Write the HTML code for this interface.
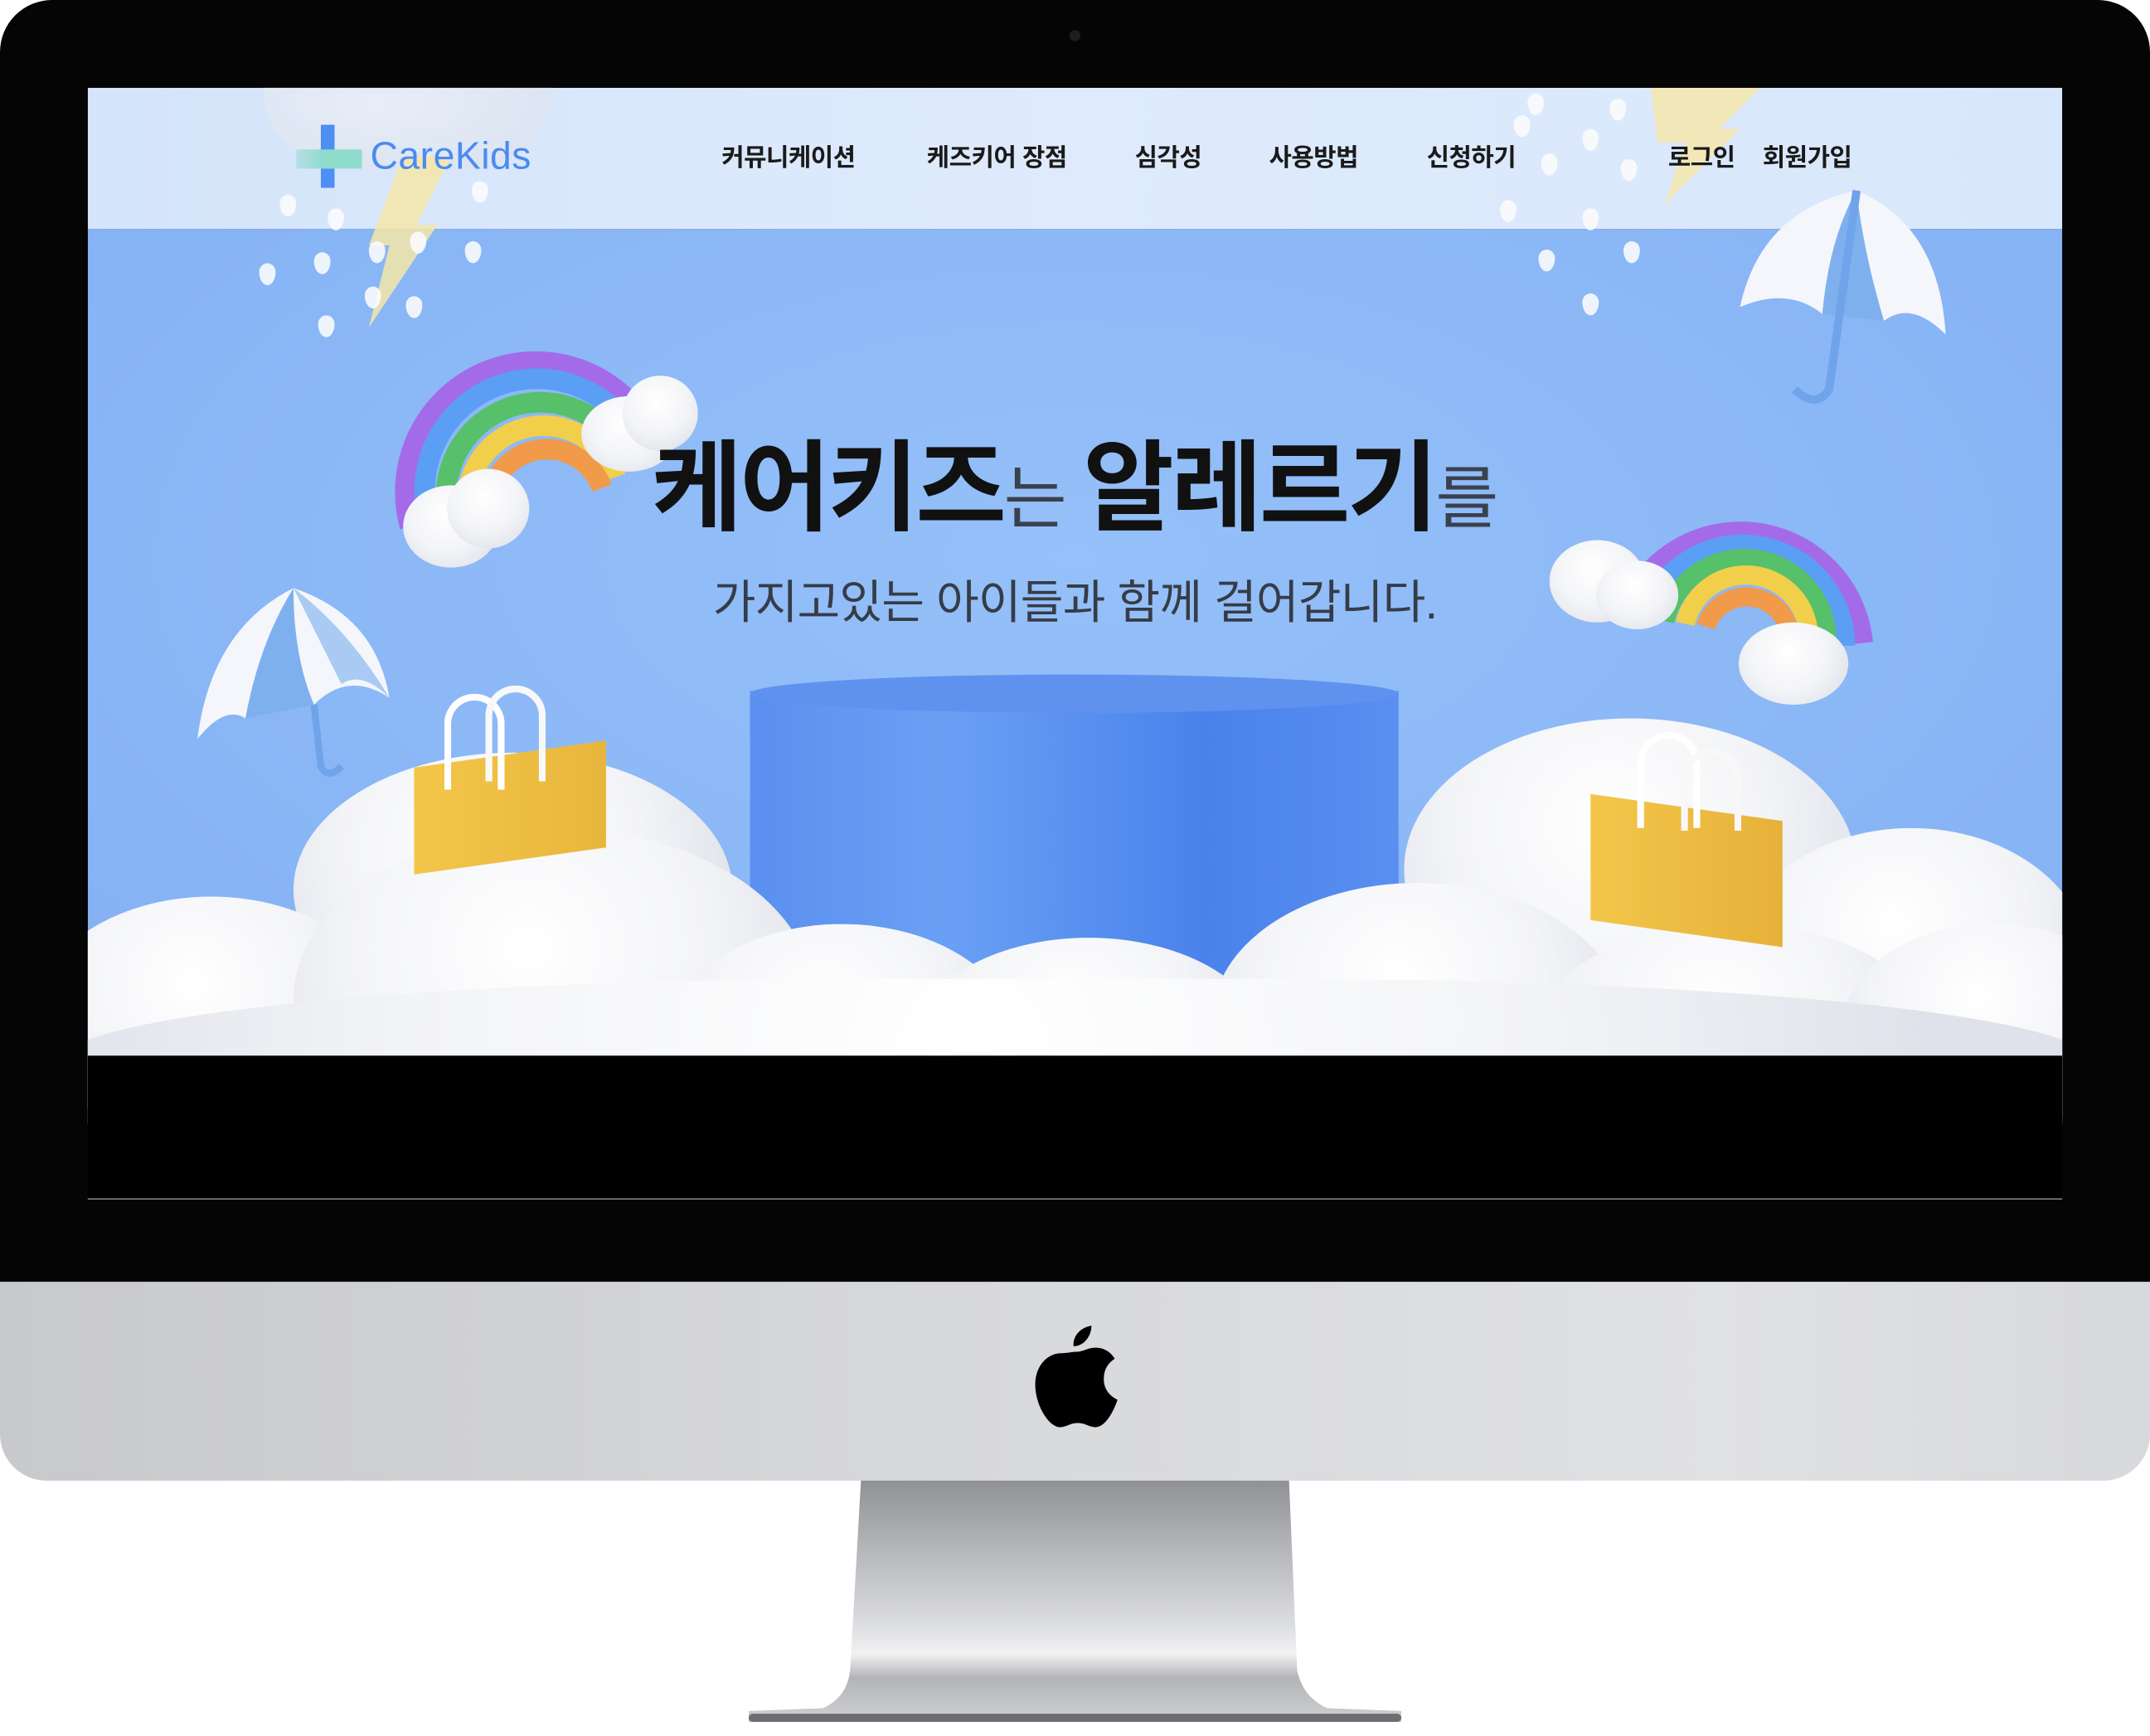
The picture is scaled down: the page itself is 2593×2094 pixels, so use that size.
<!DOCTYPE html>
<html><head><meta charset="utf-8">
<style>
*{margin:0;padding:0;box-sizing:border-box}
html,body{width:2593px;height:2093px;overflow:hidden;background:#fff}
#w{position:absolute;left:0;top:0;width:1568px;height:1266px;transform:scale(1.65370);transform-origin:0 0;font-family:"Liberation Sans","Noto Sans CJK KR",sans-serif}
.a{position:absolute}
#bezel{left:0;top:0;width:1568px;height:935px;background:#050505;border-radius:38px 38px 0 0}
#screen{left:64px;top:64px;width:1440px;height:811px;background:#000;overflow:hidden;border-bottom:1px solid #888}
#hdr{left:0;top:0;width:1440px;height:103px;background:linear-gradient(90deg,#d4e4fa,#dfebfc 50%,#d8e7fb)}
#hero{left:0;top:103px;width:1440px;height:603px;background:radial-gradient(ellipse at 50% 40%,#95c0f9,#88b5f5 70%,#84b0f2)}
.c{position:absolute;border-radius:50%;background:radial-gradient(circle at 45% 35%,#ffffff,#f3f4f7 50%,#dfe2ea 85%)}
.nav{position:absolute;top:103px;font-size:18px;font-weight:bold;color:#1a1a1a;transform:translate(-50%,-50%);white-space:nowrap;letter-spacing:-.3px}
.drop{position:absolute;width:12px;height:16px;background:#fafbfd;border-radius:50% 50% 50% 50%/40% 40% 60% 60%;opacity:.9}
#chin{left:0;top:935px;width:1568px;height:145px;background:linear-gradient(90deg,#c8c9cc,#d6d7da 40%,#e0e1e3 80%,#d8d9dc);border-radius:0 0 34px 34px}
</style></head><body><div id="w">
<svg class="a" style="left:0;top:1078px" width="1568" height="188">
<defs><linearGradient id="st" x1="0" y1="0" x2="0" y2="1"><stop offset="0" stop-color="#8f9094"/><stop offset=".3" stop-color="#b6b7bb"/><stop offset=".6" stop-color="#dcdde0"/><stop offset=".72" stop-color="#f2f2f3"/><stop offset=".82" stop-color="#b3b4b7"/><stop offset="1" stop-color="#cfd0d2"/></linearGradient></defs>
<path d="M628 0 L940 0 L946 140 Q950 160 968 168 L1022 170 L1022 178 L546 178 L546 170 L600 168 Q618 160 620 140 Z" fill="url(#st)"/>
<rect x="546" y="172" width="476" height="6" rx="3" fill="#6d6e71"/>
</svg>
<div id="bezel" class="a"></div>
<div class="a" style="left:780px;top:22px;width:8px;height:8px;border-radius:50%;background:#1e1e22"></div>
<div id="chin" class="a"></div>
<svg class="a" style="left:752px;top:965px" width="66" height="78" viewBox="0 0 66 78"><path d="M44 2 C44 10 38 17 31 17 C30 10 36 3 44 2 Z M33 21 C38 21 41 18 47 18 C53 18 58 21 61 26 C55 30 53 35 53 41 C53 48 57 53 63 56 C60 65 54 76 47 76 C42 76 40 73 34 73 C28 73 26 76 21 76 C13 76 3 60 3 45 C3 31 12 22 22 22 C27 22 30 21 33 21 Z" fill="#000"/></svg>
<div id="screen" class="a">
 <div id="hero" class="a"></div>
 <div id="hdr" class="a"></div>
 <div class="a" style="left:128px;top:-20px;width:210px;height:80px;border-radius:0 0 60px 60px;background:radial-gradient(ellipse at 40% 40%,#eef1f8,#d9dfeb);opacity:.7"></div>
 <svg class="a" style="left:190px;top:50px" width="80" height="130"><path d="M40 0 L75 0 L50 50 L65 50 L15 125 L30 65 L15 65 Z" fill="#f6e6a8" opacity=".85"/></svg>
 <svg class="a" style="left:1130px;top:0" width="90" height="90"><path d="M10 0 L90 0 L60 30 L75 30 L20 85 L35 40 L15 40 Z" fill="#f6e6a8" opacity=".8"/></svg>
 <div class="drop" style="left:140px;top:78px"></div><div class="drop" style="left:175px;top:88px"></div><div class="drop" style="left:125px;top:128px"></div><div class="drop" style="left:165px;top:120px"></div><div class="drop" style="left:205px;top:112px"></div><div class="drop" style="left:235px;top:105px"></div><div class="drop" style="left:275px;top:112px"></div><div class="drop" style="left:202px;top:145px"></div><div class="drop" style="left:232px;top:152px"></div><div class="drop" style="left:168px;top:166px"></div><div class="drop" style="left:280px;top:68px"></div>
 <div class="drop" style="left:1040px;top:20px"></div><div class="drop" style="left:1060px;top:48px"></div><div class="drop" style="left:1090px;top:30px"></div><div class="drop" style="left:1110px;top:8px"></div><div class="drop" style="left:1058px;top:118px"></div><div class="drop" style="left:1090px;top:88px"></div><div class="drop" style="left:1118px;top:52px"></div><div class="drop" style="left:1090px;top:150px"></div><div class="drop" style="left:1030px;top:82px"></div><div class="drop" style="left:1120px;top:112px"></div><div class="drop" style="left:1050px;top:4px"></div>
 <div class="a" style="left:170px;top:27px;width:10px;height:46px;background:#4f8ef2"></div>
 <div class="a" style="left:152px;top:45px;width:48px;height:14px;background:linear-gradient(90deg,rgba(131,213,199,.4),#8fdccd 40%)"></div>
 <div class="a" style="left:206px;top:34px;font-size:28px;color:#4a8bf0;letter-spacing:.3px">CareKids</div>
 <div class="nav" style="left:511px;top:50px">커뮤니케이션</div>
 <div class="nav" style="left:663px;top:50px">케즈키어 장점</div>
 <div class="nav" style="left:788px;top:50px">심각성</div>
 <div class="nav" style="left:894px;top:50px">사용방법</div>
 <div class="nav" style="left:1009px;top:50px">신청하기</div>
 <div class="nav" style="left:1177px;top:50px">로그인</div>
 <div class="nav" style="left:1254px;top:50px">회원가입</div>
 <svg class="a" style="left:215px;top:170px" width="230" height="200"><g fill="none" stroke-width="15"><path d="M20 150 A95 95 0 0 1 200 90" stroke="#a46be8"/><path d="M35 150 A80 80 0 0 1 190 98" stroke="#5b9ef5"/><path d="M50 150 A65 65 0 0 1 180 106" stroke="#56c06a"/><path d="M65 150 A50 50 0 0 1 170 114" stroke="#f2cf4a"/><path d="M80 150 A35 35 0 0 1 160 122" stroke="#f09a4a"/></g></svg>
 <div class="c" style="left:230px;top:290px;width:70px;height:60px"></div><div class="c" style="left:262px;top:278px;width:60px;height:58px"></div>
 <div class="c" style="left:360px;top:225px;width:70px;height:55px"></div><div class="c" style="left:390px;top:210px;width:55px;height:55px"></div>
 <svg class="a" style="left:1090px;top:275px" width="220" height="160"><g fill="none" stroke-width="14"><path d="M30 110 A90 90 0 0 1 205 130" stroke="#a46be8"/><path d="M45 112 A75 75 0 0 1 192 132" stroke="#5b9ef5"/><path d="M60 114 A60 60 0 0 1 178 134" stroke="#56c06a"/><path d="M75 116 A45 45 0 0 1 164 136" stroke="#f2cf4a"/><path d="M90 118 A30 30 0 0 1 150 138" stroke="#f09a4a"/></g></svg>
 <div class="c" style="left:1066px;top:330px;width:70px;height:60px"></div><div class="c" style="left:1100px;top:345px;width:60px;height:50px"></div>
 <div class="c" style="left:1204px;top:390px;width:80px;height:60px"></div>
 <svg class="a" style="left:70px;top:355px" width="160" height="150"><path d="M10 120 Q20 40 80 10 Q140 30 150 90 Q120 70 95 95 Q70 70 45 105 Q30 95 10 120 Z" fill="#f4f6fb"/><path d="M45 105 Q55 50 80 10 Q80 60 95 95" fill="#7fb0ee"/><path d="M80 10 Q120 40 150 90 Q130 70 115 80 Z" fill="#a9cbf3"/><path d="M95 95 L100 140 Q105 150 115 140" stroke="#6fa3ea" stroke-width="5" fill="none"/></svg>
 <svg class="a" style="left:1200px;top:70px" width="160" height="170"><path d="M5 90 Q20 20 90 5 Q150 30 155 110 Q130 85 110 100 Q90 80 65 95 Q40 75 5 90 Z" fill="#f4f6fb"/><path d="M65 95 Q70 40 90 5 Q95 50 110 100" fill="#7fb0ee"/><path d="M90 5 L70 150 Q60 165 45 150" stroke="#6fa3ea" stroke-width="6" fill="none"/></svg>
 <div class="a" style="left:483px;top:440px;width:473px;height:220px;border-radius:0 0 60px 60px;background:linear-gradient(90deg,#5b8ff0,#6aa0f4 30%,#4a82ec 70%,#5a8ff0)"></div>
 <div class="a" style="left:483px;top:428px;width:473px;height:28px;border-radius:50%;background:#5f92ef"></div>
 <div class="c" style="left:150px;top:485px;width:320px;height:200px"></div>
 <div class="c" style="left:960px;top:460px;width:330px;height:220px"></div>
 <div class="c" style="left:1200px;top:540px;width:260px;height:200px"></div>
 <div class="c" style="left:-40px;top:590px;width:260px;height:180px"></div>
 <div class="c" style="left:150px;top:540px;width:380px;height:250px"></div>
 <div class="c" style="left:420px;top:610px;width:260px;height:180px"></div>
 <div class="c" style="left:600px;top:620px;width:260px;height:160px"></div>
 <div class="c" style="left:820px;top:580px;width:300px;height:200px"></div>
 <div class="c" style="left:1050px;top:610px;width:300px;height:180px"></div>
 <div class="c" style="left:1280px;top:610px;width:220px;height:150px"></div>
 <div class="c" style="left:-20px;top:650px;width:1480px;height:150px;border-radius:40%"></div>
 <div class="a" style="left:238px;top:486px;width:140px;height:78px;background:linear-gradient(90deg,#f3c64a,#e8b63c);transform:skewY(-8deg)"></div>
 <div class="a" style="left:260px;top:442px;width:44px;height:70px;border:5px solid #fff;border-bottom:none;border-radius:22px 22px 0 0"></div>
 <div class="a" style="left:290px;top:436px;width:44px;height:70px;border:5px solid #f8f8f8;border-bottom:none;border-radius:22px 22px 0 0"></div>
 <div class="a" style="left:1096px;top:525px;width:140px;height:92px;background:linear-gradient(90deg,#f3c64a,#e6b13a);transform:skewY(8deg)"></div>
 <div class="a" style="left:1130px;top:470px;width:46px;height:70px;border:5px solid #fff;border-bottom:none;border-radius:23px 23px 0 0"></div>
 <div class="a" style="left:1162px;top:482px;width:44px;height:60px;border:5px solid #f8f8f8;border-bottom:none;border-radius:22px 22px 0 0"></div>
 <div class="a" style="left:0;top:706px;width:1440px;height:105px;background:#000"></div>
 <div class="a" style="left:0;top:257px;width:1440px;text-align:center;white-space:nowrap;line-height:1"><span style="font-size:72px;font-weight:bold;color:#111;letter-spacing:-2px">케어키즈</span><span style="font-size:50px;color:#3a414d;letter-spacing:-1px">는 </span><span style="font-size:72px;font-weight:bold;color:#111;letter-spacing:-2px">알레르기</span><span style="font-size:50px;color:#3a414d">를</span></div>
 <div class="a" style="left:0;top:348px;width:1440px;text-align:center;font-size:34px;color:#363c47;white-space:nowrap;letter-spacing:-.5px">가지고있는 아이들과 함께 걸어갑니다.</div>
</div>
</div></body></html>
